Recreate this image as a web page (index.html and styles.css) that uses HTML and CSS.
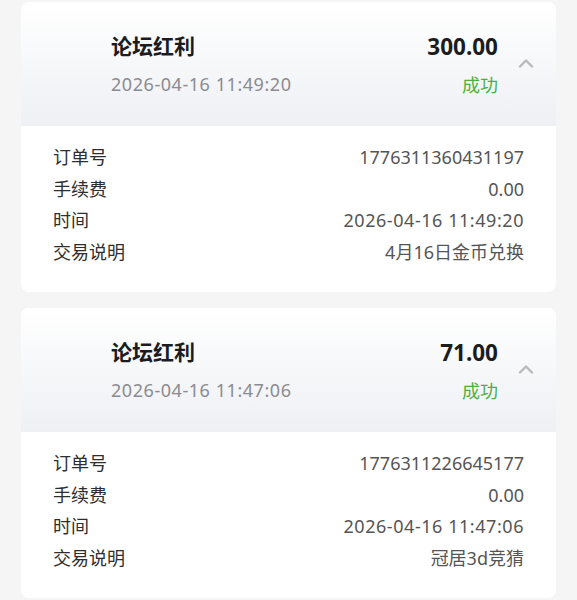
FILE: index.html
```html
<!DOCTYPE html>
<html lang="zh-CN">

<head>
  <meta charset="UTF-8">
  <meta name="viewport" content="width=device-width, initial-scale=1.0">
  <title>交易记录</title>
  <link rel="stylesheet" href="styles.css">
</head>

<body>
  <div class="card">
    <div class="card-head">
      <div class="head-main">
        <div class="title">论坛红利</div>
        <div class="date">2026-04-16 11:49:20</div>
      </div>
      <div class="head-side">
        <div class="amount">300.00</div>
        <div class="status">成功</div>
      </div>
      <svg class="chevron" width="16" height="10" viewBox="0 0 16 10">
        <path d="M2 8.5 L8 2.5 L14 8.5" fill="none" stroke="#b8b9bd" stroke-width="2.4" stroke-linecap="round" stroke-linejoin="round" />
      </svg>
    </div>
    <ul class="details">
      <li><span>订单号</span><span class="value">1776311360431197</span></li>
      <li><span>手续费</span><span class="value">0.00</span></li>
      <li><span>时间</span><span class="value time">2026-04-16 11:49:20</span></li>
      <li><span>交易说明</span><span class="value">4月16日金币兑换</span></li>
    </ul>
  </div>

  <div class="card">
    <div class="card-head">
      <div class="head-main">
        <div class="title">论坛红利</div>
        <div class="date">2026-04-16 11:47:06</div>
      </div>
      <div class="head-side">
        <div class="amount">71.00</div>
        <div class="status">成功</div>
      </div>
      <svg class="chevron" width="16" height="10" viewBox="0 0 16 10">
        <path d="M2 8.5 L8 2.5 L14 8.5" fill="none" stroke="#b8b9bd" stroke-width="2.4" stroke-linecap="round" stroke-linejoin="round" />
      </svg>
    </div>
    <ul class="details">
      <li><span>订单号</span><span class="value">1776311226645177</span></li>
      <li><span>手续费</span><span class="value">0.00</span></li>
      <li><span>时间</span><span class="value time">2026-04-16 11:47:06</span></li>
      <li><span>交易说明</span><span class="value">冠居3d竞猜</span></li>
    </ul>
  </div>
</body>

</html>
```

FILE: styles.css
```css
body {
  margin: 0;
  padding: 2px 21px;
  background-color: #f5f5f6;
  font-family: "Noto Sans", "Noto Sans CJK SC", sans-serif;
  color: #333;
}

.card {
  background-color: #fff;
  border-radius: 8px;
  overflow: hidden;
  margin-bottom: 16px;
}

.card-head {
  height: 124px;
  display: flex;
  align-items: center;
  padding: 0 22px 0 90px;
  background: linear-gradient(#ffffff, #eef0f4);
}

.head-main {
  flex: 1;
}

.title {
  font-size: 21px;
  font-weight: bold;
  color: #1c1c1e;
  line-height: 30px;
}

.date {
  margin-top: 10px;
  font-size: 18px;
  color: #8b8b90;
  line-height: 26px;
  letter-spacing: 0.55px;
}

.head-side {
  text-align: right;
  margin-top: 2px;
}

.amount {
  font-size: 22.5px;
  font-weight: bold;
  color: #1c1c1e;
  line-height: 30px;
}

.status {
  margin-top: 10px;
  font-size: 18px;
  color: #4fae40;
  line-height: 26px;
}

.chevron {
  margin-left: 20px;
  margin-bottom: 2px;
}

.details {
  list-style: none;
  margin: 0;
  padding: 16px 32px 24px;
}

.details li {
  display: flex;
  justify-content: space-between;
  font-size: 18px;
  line-height: 31.5px;
  color: #2e2e30;
}

.details .value {
  color: #555;
}

.details .time {
  letter-spacing: 0.55px;
}
```
